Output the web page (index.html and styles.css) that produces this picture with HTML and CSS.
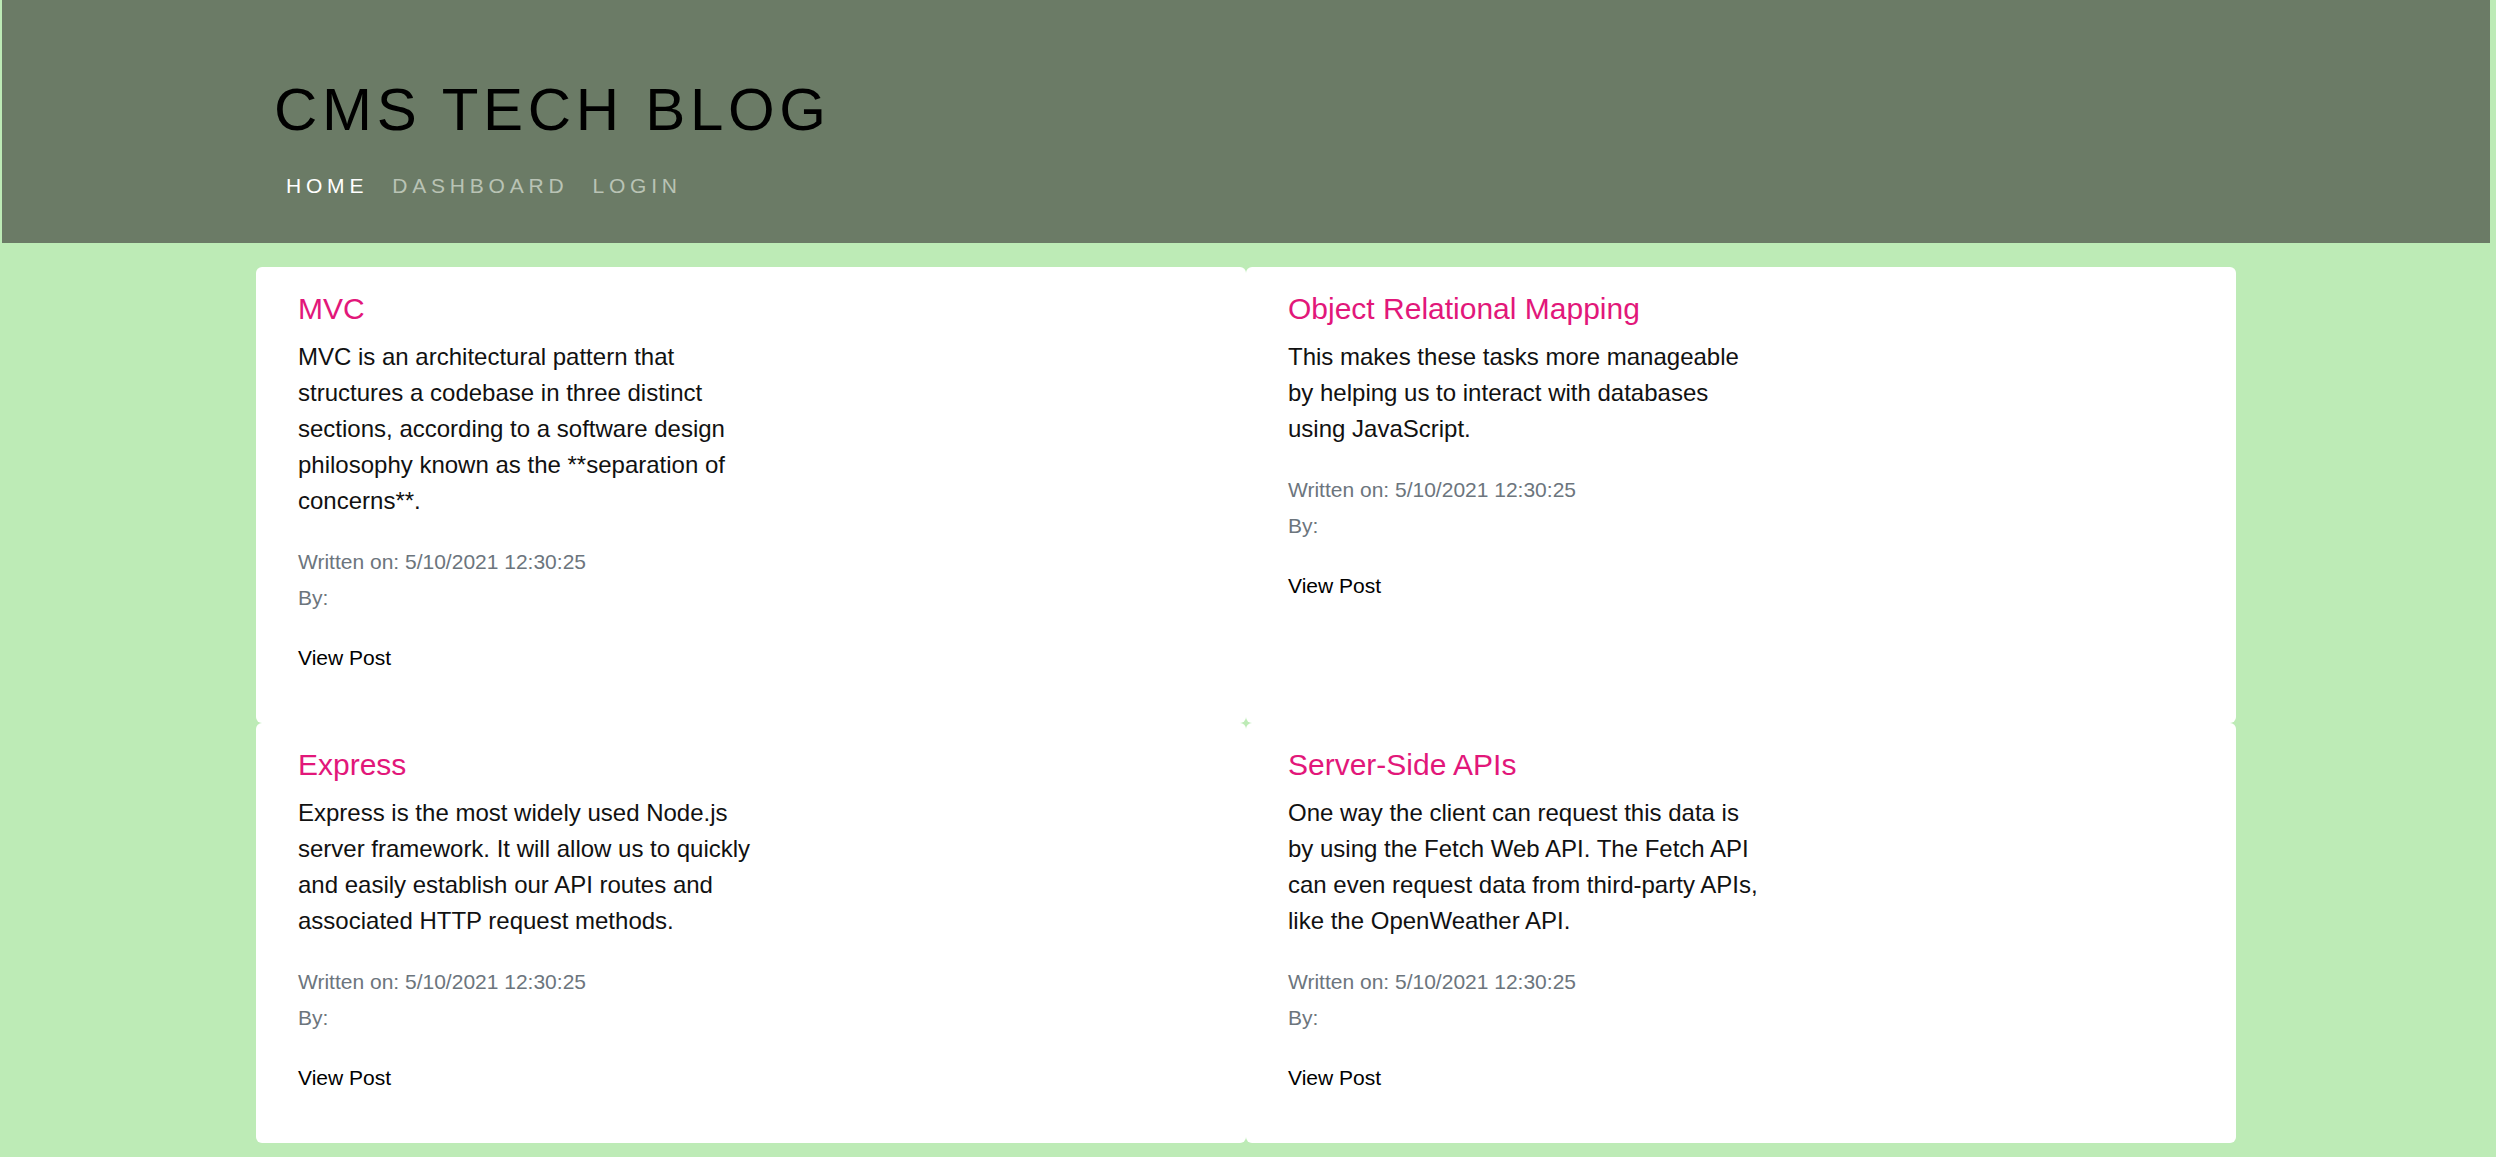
FILE: index.html
```html
<!DOCTYPE html>
<html lang="en">
<head>
<meta charset="utf-8">
<title>CMS Tech Blog</title>
<link rel="stylesheet" href="styles.css">
</head>
<body>
<header class="site-header">
  <div class="header-inner">
    <h1 class="site-title">CMS TECH BLOG</h1>
    <nav class="site-nav">
      <a class="nav-link active" href="#">HOME</a>
      <a class="nav-link" href="#">DASHBOARD</a>
      <a class="nav-link" href="#">LOGIN</a>
    </nav>
  </div>
</header>
<main class="posts">
  <article class="card">
    <h5 class="card-title">MVC</h5>
    <p class="card-text">MVC is an architectural pattern that structures a codebase in three distinct sections, according to a software design philosophy known as the **separation of concerns**.</p>
    <p class="card-meta"><small>Written on: 5/10/2021 12:30:25</small><br><small>By:</small></p>
    <p class="card-link"><a href="#">View Post</a></p>
  </article>
  <article class="card">
    <h5 class="card-title">Object Relational Mapping</h5>
    <p class="card-text">This makes these tasks more manageable by helping us to interact with databases using JavaScript.</p>
    <p class="card-meta"><small>Written on: 5/10/2021 12:30:25</small><br><small>By:</small></p>
    <p class="card-link"><a href="#">View Post</a></p>
  </article>
  <article class="card">
    <h5 class="card-title">Express</h5>
    <p class="card-text">Express is the most widely used Node.js server framework. It will allow us to quickly and easily establish our API routes and associated HTTP request methods.</p>
    <p class="card-meta"><small>Written on: 5/10/2021 12:30:25</small><br><small>By:</small></p>
    <p class="card-link"><a href="#">View Post</a></p>
  </article>
  <article class="card">
    <h5 class="card-title">Server-Side APIs</h5>
    <p class="card-text">One way the client can request this data is by using the Fetch Web API. The Fetch API can even request data from third-party APIs, like the OpenWeather API.</p>
    <p class="card-meta"><small>Written on: 5/10/2021 12:30:25</small><br><small>By:</small></p>
    <p class="card-link"><a href="#">View Post</a></p>
  </article>
</main>
</body>
</html>
```
FILE: styles.css
```css
html, body {
  margin: 0;
}

body {
  padding: 0 6px 0 2px;
  background: #bdebb6;
  font-family: "Liberation Sans", Arial, sans-serif;
  font-size: 24px;
  line-height: 1.5;
  color: #212529;
}

.site-header {
  background: #6b7b66;
  height: 243px;
  box-sizing: border-box;
  padding-top: 74px;
}

.header-inner {
  width: 1980px;
  margin: 0 auto;
  padding-left: 18px;
  box-sizing: border-box;
}

.site-title {
  margin: 0 0 24px 0;
  font-size: 60px;
  line-height: 72px;
  font-weight: 400;
  letter-spacing: 4.7px;
  color: #000;
}

.site-nav {
  display: flex;
  line-height: 31.5px;
}

.nav-link {
  font-size: 21px;
  letter-spacing: 4.8px;
  padding: 0 12px;
  color: #b9c3b5;
  text-decoration: none;
}

.nav-link.active {
  color: #ffffff;
}

.posts {
  width: 1980px;
  margin: 24px auto 0;
  display: grid;
  grid-template-columns: 1fr 1fr;
}

.card {
  background: #ffffff;
  border-radius: 6px;
  padding: 24px 42px 24px;
}

.card-title {
  margin: 0 0 12px;
  font-size: 30px;
  line-height: 36px;
  font-weight: 400;
  color: #e2177a;
}

.card-text {
  margin: 0 0 24px;
  max-width: 480px;
  color: #111;
}

.card-meta {
  margin: 0 0 24px;
}

.card-meta small {
  font-size: 21px;
  color: #6c757d;
}

.card-link {
  margin: 0 0 24px;
}

.card-link a {
  font-size: 21px;
  color: #000;
  text-decoration: none;
}
```
